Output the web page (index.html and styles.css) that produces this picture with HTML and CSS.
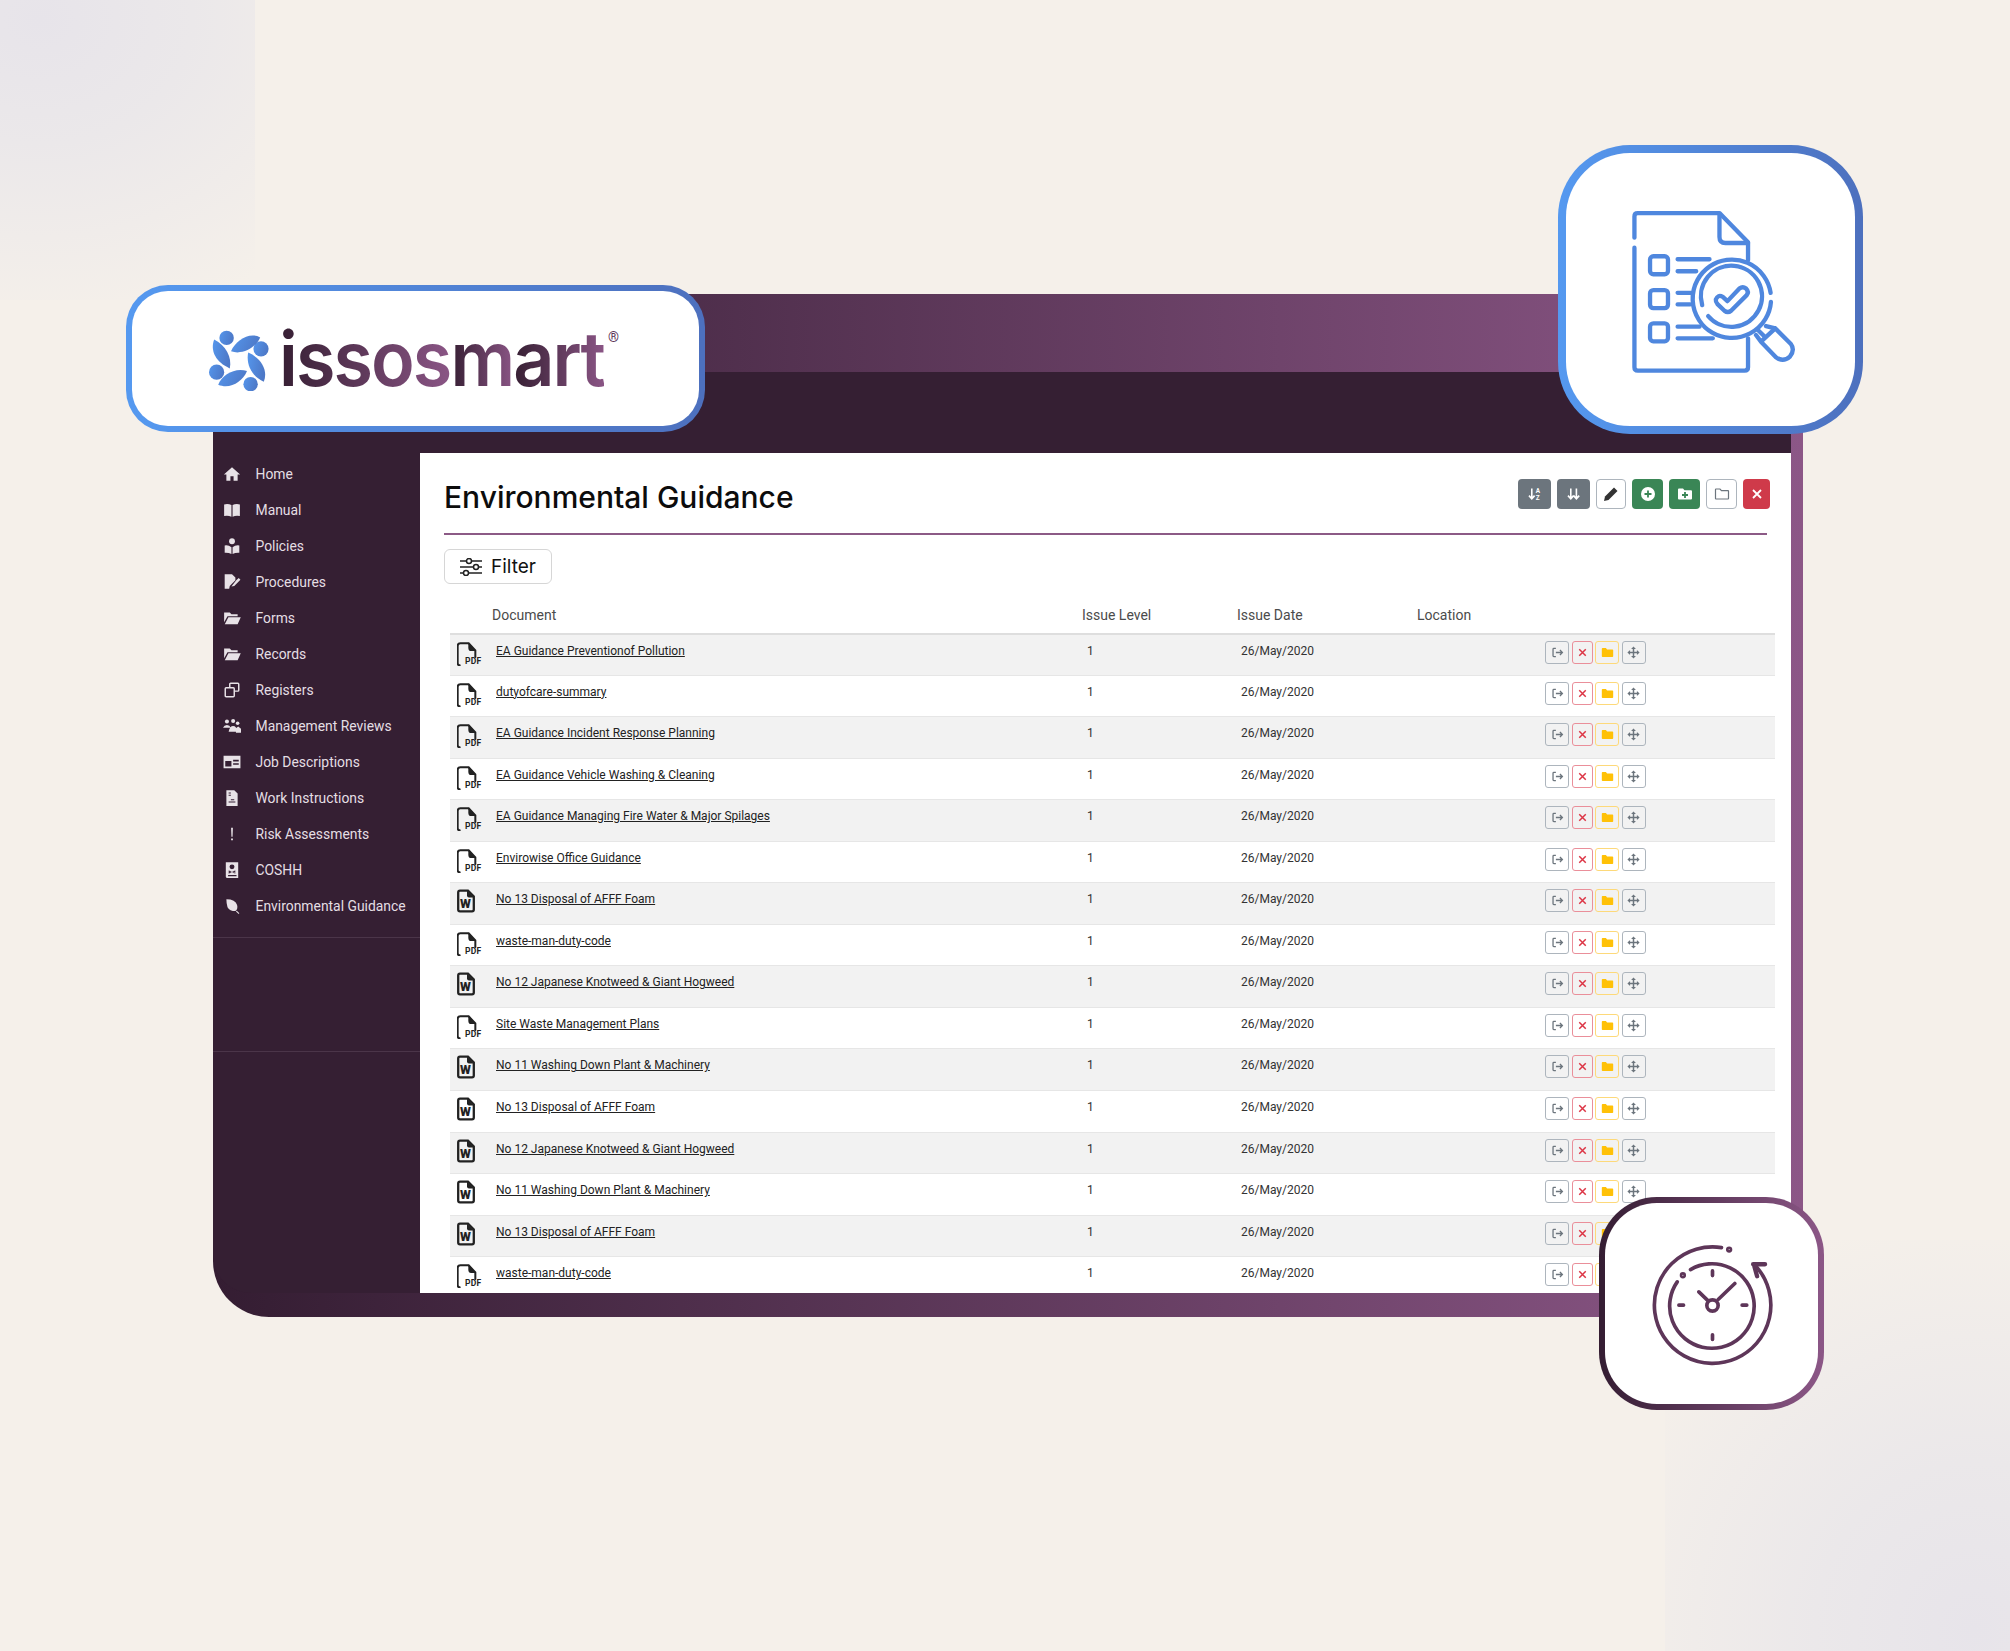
FILE: index.html
```html
<!DOCTYPE html>
<html lang="en">
<head>
<meta charset="utf-8">
<title>Environmental Guidance</title>
<link rel="stylesheet" href="styles.css">
</head>
<body>
<svg class="defs" width="0" height="0" aria-hidden="true">
  <defs>
    <linearGradient id="blue" x1="0" y1="0" x2="1" y2="0.3"><stop offset="0" stop-color="#5596ec"/><stop offset="1" stop-color="#4d79c8"/></linearGradient>
    <symbol id="i-exit" viewBox="0 0 16 16"><path d="M6 3H3.500Q2.500 3 2.500 4V12Q2.500 13 3.500 13H6M6 8H14M11 5L14 8L11 11" fill="none" stroke="currentColor" stroke-width="1.600"/></symbol>
    <symbol id="i-x" viewBox="0 0 16 16"><path d="M4 4L12 12M12 4L4 12" fill="none" stroke="currentColor" stroke-width="1.800"/></symbol>
    <symbol id="i-folder" viewBox="0 0 16 16"><path d="M1 3.500Q1 2.500 2 2.500H6L7.500 4.200H14Q15 4.200 15 5.200V12.500Q15 13.500 14 13.500H2Q1 13.500 1 12.500Z" fill="currentColor"/></symbol>
    <symbol id="i-move" viewBox="0 0 16 16"><path d="M8 .5L11 3.800H5ZM8 15.500L5 12.200H11ZM.5 8L3.800 5V11ZM15.500 8L12.200 11V5Z" fill="currentColor"/><path d="M8 3V13M3 8H13" stroke="currentColor" stroke-width="1.800"/></symbol>
    <symbol id="i-pdf" viewBox="80 333 72 72"><path d="M88 403Q82 403 82 396V345Q82 337 90 337H115L135 358V378" fill="none" stroke="#222" stroke-width="6" stroke-linecap="round"/><path d="M114 335L137 360H122Q114 360 114 350Z" fill="#222"/></symbol>
    <symbol id="i-word" viewBox="0 0 18 23"><path d="M1.200 3Q1.200 1.200 3 1.200H11L16.800 7V20Q16.800 21.800 15 21.800H3Q1.200 21.800 1.200 20Z" fill="none" stroke="#222" stroke-width="2.300"/><path d="M10 1L17 8H12Q10 8 10 6Z" fill="#222"/></symbol>
  </defs>
</svg>

<div class="stage">
  <div class="frame">
    <div class="frame-inner">
      <nav class="sidebar">
        <ul class="nav">
          <li class="nav-item"><svg class="nav-icon" viewBox="0 0 16 16"><path d="M8 2L.8 8.400H3V14H6.600V10H9.400V14H13V8.400H15.200Z"/></svg>Home</li>
          <li class="nav-item"><svg class="nav-icon" viewBox="0 0 16 16"><path d="M1 3Q4.500 2 7.500 3.600V14Q4.500 12.600 1 13.400ZM8.500 3.600Q11.500 2 15 3V13.400Q11.500 12.600 8.500 14Z"/></svg>Manual</li>
          <li class="nav-item"><svg class="nav-icon" viewBox="0 0 16 16"><circle cx="8" cy="3.800" r="2.600"/><path d="M1.500 7.500Q5 7 7.500 9V15Q5 13.800 1.500 14ZM8.500 9Q11 7 14.500 7.500V14Q11 13.800 8.500 15Z"/></svg>Policies</li>
          <li class="nav-item"><svg class="nav-icon" viewBox="0 0 16 16"><path d="M1.500 1H8L11 4V6.500L6 11.500L5.500 14H1.500ZM11.800 6.500L14 4.500L15.500 6L10 11.500L7.500 12Z"/></svg>Procedures</li>
          <li class="nav-item"><svg class="nav-icon" viewBox="0 0 16 16"><path d="M1 3H6L7.500 4.600H13V6.400H4L1 11.800ZM4.800 7.400H15.800L13 13.500H1.600Z"/></svg>Forms</li>
          <li class="nav-item"><svg class="nav-icon" viewBox="0 0 16 16"><path d="M1 3H6L7.500 4.600H13V6.400H4L1 11.800ZM4.800 7.400H15.800L13 13.500H1.600Z"/></svg>Records</li>
          <li class="nav-item"><svg class="nav-icon" viewBox="0 0 16 16"><path class="outline" d="M6 6V2.800Q6 2 6.800 2H13.200Q14 2 14 2.800V8.200Q14 9 13.200 9H10M2.800 6H9.200Q10 6 10 6.800V13.200Q10 14 9.200 14H2.800Q2 14 2 13.200V6.800Q2 6 2.800 6Z"/></svg>Registers</li>
          <li class="nav-item"><svg class="nav-icon" viewBox="0 0 16 16"><circle cx="3.500" cy="4" r="1.800"/><circle cx="9" cy="3.500" r="1.800"/><circle cx="13" cy="5.500" r="1.600"/><path d="M0 9.500Q1 7 3.500 7Q6 7 7 9.500ZM5 13Q6 8 9 8Q12 8 13 13ZM11.500 10L13.500 8.500L16 10.500V14H11.500Z"/></svg>Management Reviews</li>
          <li class="nav-item"><svg class="nav-icon" viewBox="0 0 16 16"><path fill-rule="evenodd" d="M.5 2.500H15.500V13.500H.5ZM2 7V12H7.500V7ZM9 6V7.500H14V6ZM9 9V10.500H14V9Z"/><circle cx="4.700" cy="5.500" r="1.500"/></svg>Job Descriptions</li>
          <li class="nav-item"><svg class="nav-icon" viewBox="0 0 16 16"><path fill-rule="evenodd" d="M3 1H10L13 4V15H3ZM5 3V4H7V3ZM5 5V6H7V5ZM5 11V12H11V11ZM7 9V10H10V9Z"/></svg>Work Instructions</li>
          <li class="nav-item"><svg class="nav-icon" viewBox="0 0 16 16"><path d="M7.200 2.500H8.800L8.500 10.500H7.500ZM7.200 12H8.800V13.600H7.200Z"/></svg>Risk Assessments</li>
          <li class="nav-item"><svg class="nav-icon" viewBox="0 0 16 16"><path fill-rule="evenodd" d="M2.500 1H13.500V15H3.500Q2.500 15 2.500 14ZM4.500 12.500V13.500H12V12.500ZM8 3A2.200 2.200 0 1 0 8 7.400A2.200 2.200 0 1 0 8 3ZM5 8.500V9.500L11 11V10ZM11 8.500L5 10V11L11 9.500Z"/></svg>COSHH</li>
          <li class="nav-item"><svg class="nav-icon" viewBox="0 0 16 16"><path d="M3 2Q11 2 12.500 7Q13.500 10.500 11 12.500Q6 12.500 4 9Q3 6 3 2ZM11.500 12.800L14 15L14.500 14.500L12.300 12.200Z"/></svg>Environmental Guidance</li>
        </ul>
        <div class="nav-gap"></div>
      </nav>

      <main class="panel">
        <header class="panel-head">
          <h1 class="title">Environmental Guidance</h1>
          <div class="tools">
            <button class="tool tool-gray"><svg viewBox="0 0 20 18"><path d="M6 2V14M2.500 11L6 15L9.500 11" fill="none" stroke="#fff" stroke-width="2"/><text x="11" y="8" class="mini">A</text><text x="11" y="16" class="mini">Z</text></svg></button>
            <button class="tool tool-gray"><svg viewBox="0 0 20 18"><path d="M6 2V14M2.500 11L6 15L9.500 11M13 2V14M9.500 11L13 15L16.500 11" fill="none" stroke="#fff" stroke-width="2"/></svg></button>
            <button class="tool tool-line tool-narrow"><svg viewBox="0 0 16 16"><path d="M11 1.500L14.500 5L5.500 14L1 15L2 10.500Z" fill="#333"/></svg></button>
            <button class="tool tool-green"><svg viewBox="0 0 16 16"><circle cx="8" cy="8" r="7" fill="#fff"/><path d="M8 4.500V11.500M4.500 8H11.500" stroke="#3a8656" stroke-width="1.800"/></svg></button>
            <button class="tool tool-green"><svg viewBox="0 0 16 16"><use href="#i-folder" width="16" height="16" color="#fff"/><path d="M8 6V12M5 9H11" stroke="#3a8656" stroke-width="1.800"/></svg></button>
            <button class="tool tool-line"><svg viewBox="0 0 16 16"><path d="M1.500 3.500Q1.500 3 2 3H6L7.500 4.600H14Q14.500 4.600 14.500 5.100V12.500Q14.500 13 14 13H2Q1.500 13 1.500 12.500Z" fill="none" stroke="#6c757d" stroke-width="1.200"/></svg></button>
            <button class="tool tool-red"><svg viewBox="0 0 16 16"><use href="#i-x" width="16" height="16" color="#fff"/></svg></button>
          </div>
        </header>

        <button class="filter">
          <svg class="filter-icon" viewBox="0 0 24 18"><path d="M1 3H7M13 3H23M1 9H14M20 9H23M1 15H4M10 15H23" fill="none" stroke="#222" stroke-width="1.500"/><circle cx="10" cy="3" r="2.500" fill="none" stroke="#222" stroke-width="1.500"/><circle cx="17" cy="9" r="2.500" fill="none" stroke="#222" stroke-width="1.500"/><circle cx="7" cy="15" r="2.500" fill="none" stroke="#222" stroke-width="1.500"/></svg>
          Filter
        </button>

        <div class="thead">
          <span>Document</span><span>Issue Level</span><span>Issue Date</span><span>Location</span>
        </div>

        <div class="rows">
          <div class="row"><div class="doc-icon"><svg class="pdf"><use href="#i-pdf"/></svg><span class="pdf-tag">PDF</span></div><a class="doc-link">EA Guidance Preventionof Pollution</a><span>1</span><span>26/May/2020</span><div class="acts"><button class="act"><svg><use href="#i-exit"/></svg></button><button class="act act-x"><svg><use href="#i-x"/></svg></button><button class="act act-y"><svg><use href="#i-folder"/></svg></button><button class="act"><svg><use href="#i-move"/></svg></button></div></div>
          <div class="row"><div class="doc-icon"><svg class="pdf"><use href="#i-pdf"/></svg><span class="pdf-tag">PDF</span></div><a class="doc-link">dutyofcare-summary</a><span>1</span><span>26/May/2020</span><div class="acts"><button class="act"><svg><use href="#i-exit"/></svg></button><button class="act act-x"><svg><use href="#i-x"/></svg></button><button class="act act-y"><svg><use href="#i-folder"/></svg></button><button class="act"><svg><use href="#i-move"/></svg></button></div></div>
          <div class="row"><div class="doc-icon"><svg class="pdf"><use href="#i-pdf"/></svg><span class="pdf-tag">PDF</span></div><a class="doc-link">EA Guidance Incident Response Planning</a><span>1</span><span>26/May/2020</span><div class="acts"><button class="act"><svg><use href="#i-exit"/></svg></button><button class="act act-x"><svg><use href="#i-x"/></svg></button><button class="act act-y"><svg><use href="#i-folder"/></svg></button><button class="act"><svg><use href="#i-move"/></svg></button></div></div>
          <div class="row"><div class="doc-icon"><svg class="pdf"><use href="#i-pdf"/></svg><span class="pdf-tag">PDF</span></div><a class="doc-link">EA Guidance Vehicle Washing &amp; Cleaning</a><span>1</span><span>26/May/2020</span><div class="acts"><button class="act"><svg><use href="#i-exit"/></svg></button><button class="act act-x"><svg><use href="#i-x"/></svg></button><button class="act act-y"><svg><use href="#i-folder"/></svg></button><button class="act"><svg><use href="#i-move"/></svg></button></div></div>
          <div class="row"><div class="doc-icon"><svg class="pdf"><use href="#i-pdf"/></svg><span class="pdf-tag">PDF</span></div><a class="doc-link">EA Guidance Managing Fire Water &amp; Major Spilages</a><span>1</span><span>26/May/2020</span><div class="acts"><button class="act"><svg><use href="#i-exit"/></svg></button><button class="act act-x"><svg><use href="#i-x"/></svg></button><button class="act act-y"><svg><use href="#i-folder"/></svg></button><button class="act"><svg><use href="#i-move"/></svg></button></div></div>
          <div class="row"><div class="doc-icon"><svg class="pdf"><use href="#i-pdf"/></svg><span class="pdf-tag">PDF</span></div><a class="doc-link">Envirowise Office Guidance</a><span>1</span><span>26/May/2020</span><div class="acts"><button class="act"><svg><use href="#i-exit"/></svg></button><button class="act act-x"><svg><use href="#i-x"/></svg></button><button class="act act-y"><svg><use href="#i-folder"/></svg></button><button class="act"><svg><use href="#i-move"/></svg></button></div></div>
          <div class="row"><div class="doc-icon"><svg class="word"><use href="#i-word"/></svg><span class="word-tag">W</span></div><a class="doc-link">No 13 Disposal of AFFF Foam</a><span>1</span><span>26/May/2020</span><div class="acts"><button class="act"><svg><use href="#i-exit"/></svg></button><button class="act act-x"><svg><use href="#i-x"/></svg></button><button class="act act-y"><svg><use href="#i-folder"/></svg></button><button class="act"><svg><use href="#i-move"/></svg></button></div></div>
          <div class="row"><div class="doc-icon"><svg class="pdf"><use href="#i-pdf"/></svg><span class="pdf-tag">PDF</span></div><a class="doc-link">waste-man-duty-code</a><span>1</span><span>26/May/2020</span><div class="acts"><button class="act"><svg><use href="#i-exit"/></svg></button><button class="act act-x"><svg><use href="#i-x"/></svg></button><button class="act act-y"><svg><use href="#i-folder"/></svg></button><button class="act"><svg><use href="#i-move"/></svg></button></div></div>
          <div class="row"><div class="doc-icon"><svg class="word"><use href="#i-word"/></svg><span class="word-tag">W</span></div><a class="doc-link">No 12 Japanese Knotweed &amp; Giant Hogweed</a><span>1</span><span>26/May/2020</span><div class="acts"><button class="act"><svg><use href="#i-exit"/></svg></button><button class="act act-x"><svg><use href="#i-x"/></svg></button><button class="act act-y"><svg><use href="#i-folder"/></svg></button><button class="act"><svg><use href="#i-move"/></svg></button></div></div>
          <div class="row"><div class="doc-icon"><svg class="pdf"><use href="#i-pdf"/></svg><span class="pdf-tag">PDF</span></div><a class="doc-link">Site Waste Management Plans</a><span>1</span><span>26/May/2020</span><div class="acts"><button class="act"><svg><use href="#i-exit"/></svg></button><button class="act act-x"><svg><use href="#i-x"/></svg></button><button class="act act-y"><svg><use href="#i-folder"/></svg></button><button class="act"><svg><use href="#i-move"/></svg></button></div></div>
          <div class="row"><div class="doc-icon"><svg class="word"><use href="#i-word"/></svg><span class="word-tag">W</span></div><a class="doc-link">No 11 Washing Down Plant &amp; Machinery</a><span>1</span><span>26/May/2020</span><div class="acts"><button class="act"><svg><use href="#i-exit"/></svg></button><button class="act act-x"><svg><use href="#i-x"/></svg></button><button class="act act-y"><svg><use href="#i-folder"/></svg></button><button class="act"><svg><use href="#i-move"/></svg></button></div></div>
          <div class="row"><div class="doc-icon"><svg class="word"><use href="#i-word"/></svg><span class="word-tag">W</span></div><a class="doc-link">No 13 Disposal of AFFF Foam</a><span>1</span><span>26/May/2020</span><div class="acts"><button class="act"><svg><use href="#i-exit"/></svg></button><button class="act act-x"><svg><use href="#i-x"/></svg></button><button class="act act-y"><svg><use href="#i-folder"/></svg></button><button class="act"><svg><use href="#i-move"/></svg></button></div></div>
          <div class="row"><div class="doc-icon"><svg class="word"><use href="#i-word"/></svg><span class="word-tag">W</span></div><a class="doc-link">No 12 Japanese Knotweed &amp; Giant Hogweed</a><span>1</span><span>26/May/2020</span><div class="acts"><button class="act"><svg><use href="#i-exit"/></svg></button><button class="act act-x"><svg><use href="#i-x"/></svg></button><button class="act act-y"><svg><use href="#i-folder"/></svg></button><button class="act"><svg><use href="#i-move"/></svg></button></div></div>
          <div class="row"><div class="doc-icon"><svg class="word"><use href="#i-word"/></svg><span class="word-tag">W</span></div><a class="doc-link">No 11 Washing Down Plant &amp; Machinery</a><span>1</span><span>26/May/2020</span><div class="acts"><button class="act"><svg><use href="#i-exit"/></svg></button><button class="act act-x"><svg><use href="#i-x"/></svg></button><button class="act act-y"><svg><use href="#i-folder"/></svg></button><button class="act"><svg><use href="#i-move"/></svg></button></div></div>
          <div class="row"><div class="doc-icon"><svg class="word"><use href="#i-word"/></svg><span class="word-tag">W</span></div><a class="doc-link">No 13 Disposal of AFFF Foam</a><span>1</span><span>26/May/2020</span><div class="acts"><button class="act"><svg><use href="#i-exit"/></svg></button><button class="act act-x"><svg><use href="#i-x"/></svg></button><button class="act act-y"><svg><use href="#i-folder"/></svg></button><button class="act"><svg><use href="#i-move"/></svg></button></div></div>
          <div class="row"><div class="doc-icon"><svg class="pdf"><use href="#i-pdf"/></svg><span class="pdf-tag">PDF</span></div><a class="doc-link">waste-man-duty-code</a><span>1</span><span>26/May/2020</span><div class="acts"><button class="act"><svg><use href="#i-exit"/></svg></button><button class="act act-x"><svg><use href="#i-x"/></svg></button><button class="act act-y"><svg><use href="#i-folder"/></svg></button><button class="act"><svg><use href="#i-move"/></svg></button></div></div>
        </div>
      </main>
    </div>
  </div>

  <div class="card card-logo">
    <svg class="logo-mark" viewBox="278 210 150 178" preserveAspectRatio="none">
      <g fill="url(#blue)">
        <ellipse cx="322" cy="233" rx="18" ry="21"/><ellipse cx="408" cy="265" rx="19" ry="22"/><ellipse cx="297" cy="333" rx="19" ry="22"/><ellipse cx="382" cy="368" rx="18" ry="21"/>
        <path d="M333 272C345 240 380 214 406 232C395 262 360 284 333 272Z"/>
        <path d="M291 238C280 270 295 305 330 322C336 290 320 255 291 238Z"/>
        <path d="M376 276C370 310 385 345 415 361C426 330 410 292 376 276Z"/>
        <path d="M301 370C330 384 362 362 373 330C345 318 310 340 301 370Z"/>
      </g>
    </svg>
    <div class="wordmark"><span>issos</span><span>m</span><span>art</span></div>
    <sup class="reg">®</sup>
  </div>

  <div class="card card-doc">
    <svg class="card-art" viewBox="258 98 870 820" fill="none" stroke="#4f87de" stroke-width="13" stroke-linecap="round" stroke-linejoin="round">
      <path d="M464 352V288Q464 278 474 278H720L806 366V420M806 655V742Q806 752 796 752H474Q464 752 464 742V382"/>
      <path d="M720 280V350Q720 368 738 368H806"/>
      <rect x="511" y="408" width="54" height="54" rx="10"/><rect x="511" y="510" width="54" height="54" rx="10"/><rect x="511" y="610" width="54" height="54" rx="10"/>
      <path d="M594 417H690M594 453H650M594 518H635M594 553H632M594 620H660M594 655H700"/>
      <path d="M874 518A118 118 0 1 0 875 545"/>
      <path d="M668 555A92 92 0 1 1 686 588"/>
      <path d="M709 538Q715 522 730 530L744 543L780 505Q790 497 800 505Q810 515 802 525L755 572Q745 580 735 572L714 552Q708 545 709 538Z"/>
      <path d="M888 625L935 672Q948 690 932 710Q912 728 890 712L845 665ZM830 645L845 665M860 618L888 625M838 632L858 652"/>
    </svg>
  </div>

  <div class="card card-clock">
    <svg class="card-art" viewBox="196 68 638 604" fill="none" stroke="#5e3659" stroke-width="11" stroke-linecap="round">
      <path d="M545 202A175 175 0 1 0 652 262"/>
      <path d="M640 252H676M642 252L652 288" stroke-width="13"/>
      <path d="M452 268A127 127 0 1 1 412 305"/>
      <path d="M518 272V286M518 464V478M417 375H431M607 375H621M505 362L477 335M535 358L585 310"/>
      <circle cx="518" cy="376" r="17"/>
      <circle cx="568" cy="208" r="4"/><circle cx="429" cy="285" r="4"/>
    </svg>
  </div>
</div>
</body>
</html>
```
FILE: styles.css
```css
html, body { margin: 0; padding: 0; }
body { background: #f5f0ea; font-family: "Roboto", "Liberation Sans", sans-serif; }
.defs { position: absolute; }
ul { list-style: none; margin: 0; padding: 0; }
button { font: inherit; cursor: pointer; }

.stage {
  position: relative;
  width: 2010px;
  height: 1651px;
  box-sizing: border-box;
  padding: 294px 0 0 213px;
  overflow: hidden;
  background: #f5f0ea;
}
.stage::before, .stage::after { content: ""; position: absolute; pointer-events: none; }
.stage::before {
  left: 0; top: 0; width: 255px; height: 300px;
  background: radial-gradient(ellipse 380px 310px at 40px 20px, #e7e4ea 0, #ebe8ea 40%, #f5f0ea 100%);
}
.stage::after {
  right: 0; bottom: 0; width: 345px; height: 411px;
  background: radial-gradient(ellipse 400px 420px at 310px 390px, #e7e4ea 0, #ebe8ea 40%, #f5f0ea 100%);
}

.frame {
  position: relative;
  z-index: 1;
  width: 1590px;
  height: 1023px;
  box-sizing: border-box;
  padding: 78px 12px 24px 0;
  border-radius: 0 0 0 56px;
  background: linear-gradient(90deg, #341d32 0%, #8c5787 100%);
}
.frame-inner {
  display: flex;
  height: 100%;
  box-sizing: border-box;
  padding-top: 81px;
  background: #351f33;
  border-radius: 0 0 0 38px;
}

.sidebar { width: 207px; flex: none; }
.nav { padding: 3px 0 13px; border-bottom: 1px solid #4b3549; }
.nav-item {
  display: flex;
  align-items: center;
  gap: 14.500px;
  height: 36px;
  padding-left: 10px;
  color: #e4dee3;
  font-size: 13.900px;
}
.nav-icon { width: 18px; height: 18px; flex: none; fill: #e8e2e7; }
.nav-icon .outline { fill: none; stroke: #e8e2e7; stroke-width: 1.300; }
.nav-gap { height: 113px; border-bottom: 1px solid #4b3549; }

.panel {
  flex: 1;
  min-width: 0;
  overflow: hidden;
  background: #fff;
  padding-left: 24px;
}
.panel-head {
  display: flex;
  align-items: center;
  justify-content: space-between;
  box-sizing: border-box;
  height: 82px;
  margin-right: 24px;
  padding-top: 7px;
  border-bottom: 2px solid #8c5a86;
}
.title {
  margin: 0;
  font-family: "Inter", "Liberation Sans", sans-serif;
  font-size: 30px;
  font-weight: 500;
  color: #0c0c0c;
}
.tools { display: flex; gap: 6px; margin: -5px -3px 0 0; }
.tool {
  display: flex;
  align-items: center;
  justify-content: center;
  box-sizing: border-box;
  width: 33px;
  height: 30px;
  padding: 0;
  border: 1px solid transparent;
  border-radius: 4px;
}
.tool svg { width: 16px; height: 16px; }
.tool-gray { background: #6c757d; }
.tool-green { width: 31px; background: #3a8656; }
.tool-red { width: 27px; background: #cf3a4a; }
.tool-line { width: 31px; background: #fff; border-color: #adb5bd; }
.tool-narrow { width: 30px; }
.mini { font: 700 8px "Roboto", sans-serif; fill: #fff; }

.filter {
  display: flex;
  align-items: center;
  gap: 8px;
  box-sizing: border-box;
  width: 108px;
  height: 35px;
  margin-top: 14px;
  padding: 0 0 0 14px;
  border: 1.500px solid #d6d6d6;
  border-radius: 6px;
  background: #fff;
  color: #111;
  font-family: "Inter", "Liberation Sans", sans-serif;
  font-size: 19px;
}
.filter-icon { width: 24px; height: 18px; }

.thead {
  display: grid;
  grid-template-columns: 590px 155px 180px auto;
  padding: 21px 0 0 48px;
  height: 49px;
  box-sizing: border-box;
  color: #4b4b4b;
  font-size: 14px;
  line-height: 20px;
}

.rows { width: 1325px; margin-left: 6px; }
.row {
  display: grid;
  grid-template-columns: 46px 591px 154px 304px auto;
  box-sizing: border-box;
  height: 41.560px;
  padding-top: 9px;
  border-top: 1px solid #e6e6e6;
  font-size: 12px;
  line-height: 15px;
  color: #333;
}
.row:first-child { border-top: 2px solid #dedede; }
.row:nth-child(odd) { background: #f2f2f2; }
.doc-icon { position: relative; }
.pdf { position: absolute; left: 7px; top: -2px; width: 24px; height: 24px; }
.pdf-tag {
  position: absolute;
  left: 15px;
  top: 12px;
  font: 700 8.500px/10px "Roboto", sans-serif;
  color: #222;
  letter-spacing: .3px;
}
.word { position: absolute; left: 7px; top: -3px; width: 18px; height: 24px; }
.word-tag {
  position: absolute;
  left: 10px;
  top: 5px;
  font: 900 12.500px/14px "Roboto", sans-serif;
  color: #222;
}
.doc-link { color: #222; text-decoration: underline; }
.acts { display: flex; gap: 2.500px; margin-top: -3px; }
.act {
  display: flex;
  align-items: center;
  justify-content: center;
  box-sizing: border-box;
  width: 24px;
  height: 23px;
  padding: 0;
  border: 1px solid #adb5bd;
  border-radius: 3px;
  background: transparent;
  color: #6c757d;
}
.act svg { width: 13px; height: 13px; }
.act-x { width: 21px; border-color: #ea8f9a; color: #dc3545; }
.act-y { border-color: #fdd97a; color: #ffc107; }

.card {
  position: absolute;
  z-index: 2;
  box-sizing: border-box;
  background: linear-gradient(#fff, #fff) padding-box, linear-gradient(90deg, #5599f0, #4d70be) border-box;
  border-style: solid;
  border-color: transparent;
}
.card-logo { left: 126px; top: 285px; width: 579px; height: 147px; border-width: 6px; border-radius: 42px; }
.card-doc { left: 1558px; top: 145px; width: 305px; height: 289px; border-width: 8px; border-radius: 72px; }
.card-clock {
  left: 1599px; top: 1197px; width: 225px; height: 213px; border-width: 6px; border-radius: 58px;
  background: linear-gradient(#fff, #fff) padding-box, linear-gradient(90deg, #341d32, #8c5787) border-box;
}
.card-art { display: block; width: 100%; height: 100%; }

.logo-mark { position: absolute; left: 77px; top: 39px; width: 60px; height: 61px; }
.wordmark {
  position: absolute;
  left: 147px;
  top: 21px;
  white-space: nowrap;
  font-family: "Inter", "Liberation Sans", sans-serif;
  font-size: 76px;
  line-height: 92px;
  font-weight: 600;
  letter-spacing: -2px;
  transform: scaleX(.945);
  transform-origin: left center;
}
.wordmark span {
  background: linear-gradient(90deg, #361f33, #8a5585);
  -webkit-background-clip: text;
  background-clip: text;
  color: transparent;
}
.reg { position: absolute; left: 476px; top: 38px; margin: 0; font-size: 14px; line-height: 16px; color: #5a3358; }
```
